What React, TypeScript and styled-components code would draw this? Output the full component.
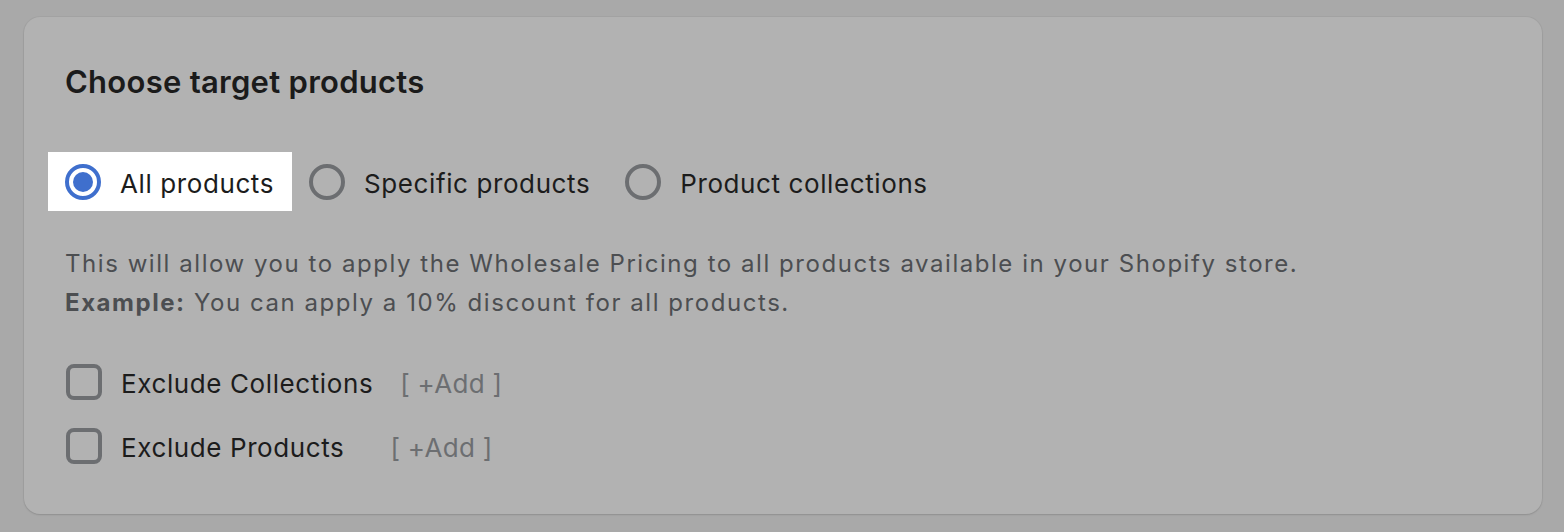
import React from "react";
import styled, { createGlobalStyle } from "styled-components";

const GlobalStyle = createGlobalStyle`
  html, body {
    margin: 0;
    padding: 0;
    background: #a9a9a9;
  }
  body {
    font-family: Inter, "Noto Sans", "Liberation Sans", sans-serif;
    -webkit-font-smoothing: antialiased;
  }
`;

const Page = styled.div`
  width: 1564px;
  height: 532px;
  box-sizing: border-box;
  padding: 17px 22px 18px 24px;
  display: flex;
`;

const Card = styled.section`
  flex: 1;
  background: #b2b2b2;
  border-radius: 16px;
  box-shadow: 0 1px 2px rgba(0, 0, 0, 0.12), 0 0 0 1px rgba(0, 0, 0, 0.03);
  padding: 47px 41px 0 41px;
  display: flex;
  flex-direction: column;
`;

const Title = styled.h2`
  margin: 0;
  font-size: 31px;
  line-height: 36px;
  font-weight: 600;
  color: #1b1b1b;
  letter-spacing: 0.27px;
`;

const RadioGroup = styled.div`
  display: flex;
  margin: 52px 0 0 -17px;
`;

const RadioOption = styled.label<{ $highlight?: boolean }>`
  display: flex;
  align-items: center;
  gap: 19px;
  height: 59px;
  padding: 0 18px 0 17px;
  background: ${(p) => (p.$highlight ? "#ffffff" : "transparent")};
  font-size: 26px;
  letter-spacing: 0.6px;
  color: #1c1c1c;
  cursor: pointer;
`;

const OptionText = styled.span`
  padding-top: 3px;
`;

const RadioCircle = styled.span<{ $checked?: boolean }>`
  width: 36px;
  height: 36px;
  box-sizing: border-box;
  border-radius: 50%;
  border: 4px solid ${(p) => (p.$checked ? "#3f6fcd" : "#6c6e71")};
  display: flex;
  align-items: center;
  justify-content: center;
  &::after {
    content: "";
    display: ${(p) => (p.$checked ? "block" : "none")};
    width: 20px;
    height: 20px;
    border-radius: 50%;
    background: #3f6fcd;
  }
`;

const Description = styled.p`
  margin: 33px 0 0 0;
  font-size: 24px;
  line-height: 39px;
  letter-spacing: 1.55px;
  color: #4c4e51;
  b {
    font-weight: 700;
  }
`;

const CheckList = styled.div`
  display: flex;
  flex-direction: column;
  gap: 16px;
  margin-top: 36px;
`;

const CheckRow = styled.label`
  display: flex;
  align-items: center;
  height: 48px;
  font-size: 26px;
  letter-spacing: 0.6px;
  color: #1c1c1c;
`;

const CheckText = styled.span`
  padding-top: 2px;
`;

const CheckBox = styled.span`
  width: 36px;
  height: 36px;
  box-sizing: border-box;
  border: 4px solid #6c6e71;
  border-radius: 8px;
  margin: 0 19px 0 1px;
`;

const AddLink = styled.span<{ $gap: number }>`
  margin-left: ${(p) => p.$gap}px;
  padding-top: 2px;
  color: #6c6e71;
  font-size: 26px;
  letter-spacing: 0.3px;
`;

export default function App() {
  return (
    <>
      <GlobalStyle />
      <Page>
        <Card>
          <Title>Choose target products</Title>
          <RadioGroup>
            <RadioOption $highlight>
              <RadioCircle $checked />
              <OptionText>All products</OptionText>
            </RadioOption>
            <RadioOption>
              <RadioCircle />
              <OptionText>Specific products</OptionText>
            </RadioOption>
            <RadioOption>
              <RadioCircle />
              <OptionText>Product collections</OptionText>
            </RadioOption>
          </RadioGroup>
          <Description>
            This will allow you to apply the Wholesale Pricing to all products available in your Shopify store.
            <br />
            <b>Example:</b> You can apply a 10% discount for all products.
          </Description>
          <CheckList>
            <CheckRow>
              <CheckBox />
              <CheckText>Exclude Collections</CheckText>
              <AddLink $gap={27}>[ +Add ]</AddLink>
            </CheckRow>
            <CheckRow>
              <CheckBox />
              <CheckText>Exclude Products</CheckText>
              <AddLink $gap={46}>[ +Add ]</AddLink>
            </CheckRow>
          </CheckList>
        </Card>
      </Page>
    </>
  );
}
